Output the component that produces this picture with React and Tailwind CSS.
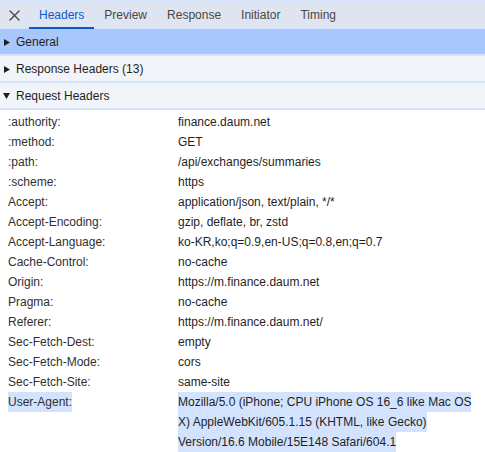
import React from "react";

const requestHeaders = [
  [":authority:", "finance.daum.net"],
  [":method:", "GET"],
  [":path:", "/api/exchanges/summaries"],
  [":scheme:", "https"],
  ["Accept:", "application/json, text/plain, */*"],
  ["Accept-Encoding:", "gzip, deflate, br, zstd"],
  ["Accept-Language:", "ko-KR,ko;q=0.9,en-US;q=0.8,en;q=0.7"],
  ["Cache-Control:", "no-cache"],
  ["Origin:", "https://m.finance.daum.net"],
  ["Pragma:", "no-cache"],
  ["Referer:", "https://m.finance.daum.net/"],
  ["Sec-Fetch-Dest:", "empty"],
  ["Sec-Fetch-Mode:", "cors"],
  ["Sec-Fetch-Site:", "same-site"],
];

const userAgent =
  "Mozilla/5.0 (iPhone; CPU iPhone OS 16_6 like Mac OS X) AppleWebKit/605.1.15 (KHTML, like Gecko) Version/16.6 Mobile/15E148 Safari/604.1";

const tabs = ["Headers", "Preview", "Response", "Initiator", "Timing"];

const Triangle = ({ open }) =>
  open ? (
    <svg width="7" height="6" viewBox="0 0 7 6" className="ml-[3px] mr-[6px]">
      <path d="M0 0 L7 0 L3.5 6 Z" fill="#1f1f1f" />
    </svg>
  ) : (
    <svg width="6" height="7" viewBox="0 0 6 7" className="ml-[4px] mr-[6px]">
      <path d="M0 0 L6 3.5 L0 7 Z" fill="#1f1f1f" />
    </svg>
  );

const SectionTitle = ({ title, open, selected }) => (
  <div
    className={
      "flex items-center h-[27px] pt-[1px] border-b-2 border-[#d3e3fd] text-[12px] text-[#1f1f1f] " +
      (selected ? "bg-[#a8c7fa]" : "bg-[#f1f4f9]")
    }
  >
    <Triangle open={open} />
    <span>{title}</span>
  </div>
);

const App = () => {
  return (
    <div
      className="w-[485px] h-[452px] overflow-hidden bg-white"
      style={{ fontFamily: '"Liberation Sans", Arial, sans-serif' }}
    >
      {/* tab strip */}
      <div className="flex h-[29px] border-t border-[#d3e3fd] bg-[#dfe5f0] shadow-[inset_0_-2px_0_#d3e3fd]">
        <div className="w-[29px] flex items-center justify-center pt-[1px]">
          <svg width="11" height="11" viewBox="0 0 11 11">
            <path
              d="M1 1 L10 10 M10 1 L1 10"
              stroke="#474747"
              strokeWidth="1.4"
              strokeLinecap="round"
            />
          </svg>
        </div>
        {tabs.map((t, i) => (
          <div
            key={t}
            className={
              "flex items-center px-[10px] pt-[1px] text-[12px] border-b-2 " +
              (i === 0
                ? "text-[#0b57d0] border-[#0b57d0]"
                : "text-[#474747] border-transparent")
            }
          >
            {t}
          </div>
        ))}
      </div>

      <SectionTitle title="General" selected />
      <SectionTitle title="Response Headers (13)" />
      <SectionTitle title="Request Headers" open />

      <div className="pt-[2px] text-[12px] leading-[20px]">
        {requestHeaders.map(([k, v]) => (
          <div key={k} className="flex pl-[8px]">
            <div className="w-[170px] shrink-0 text-[#303030]">{k}</div>
            <div className="pr-[12px] text-[#1f1f1f]">{v}</div>
          </div>
        ))}
        <div className="flex pl-[8px]">
          <div className="w-[170px] shrink-0 text-[#303030]">
            <span className="bg-[#d3e3fd] py-[3px]">User-Agent:</span>
          </div>
          <div className="pr-[12px] text-[#1f1f1f]">
            <span className="bg-[#d3e3fd] py-[3px] box-decoration-clone">
              {userAgent}
            </span>
          </div>
        </div>
      </div>
    </div>
  );
};

export default App;
